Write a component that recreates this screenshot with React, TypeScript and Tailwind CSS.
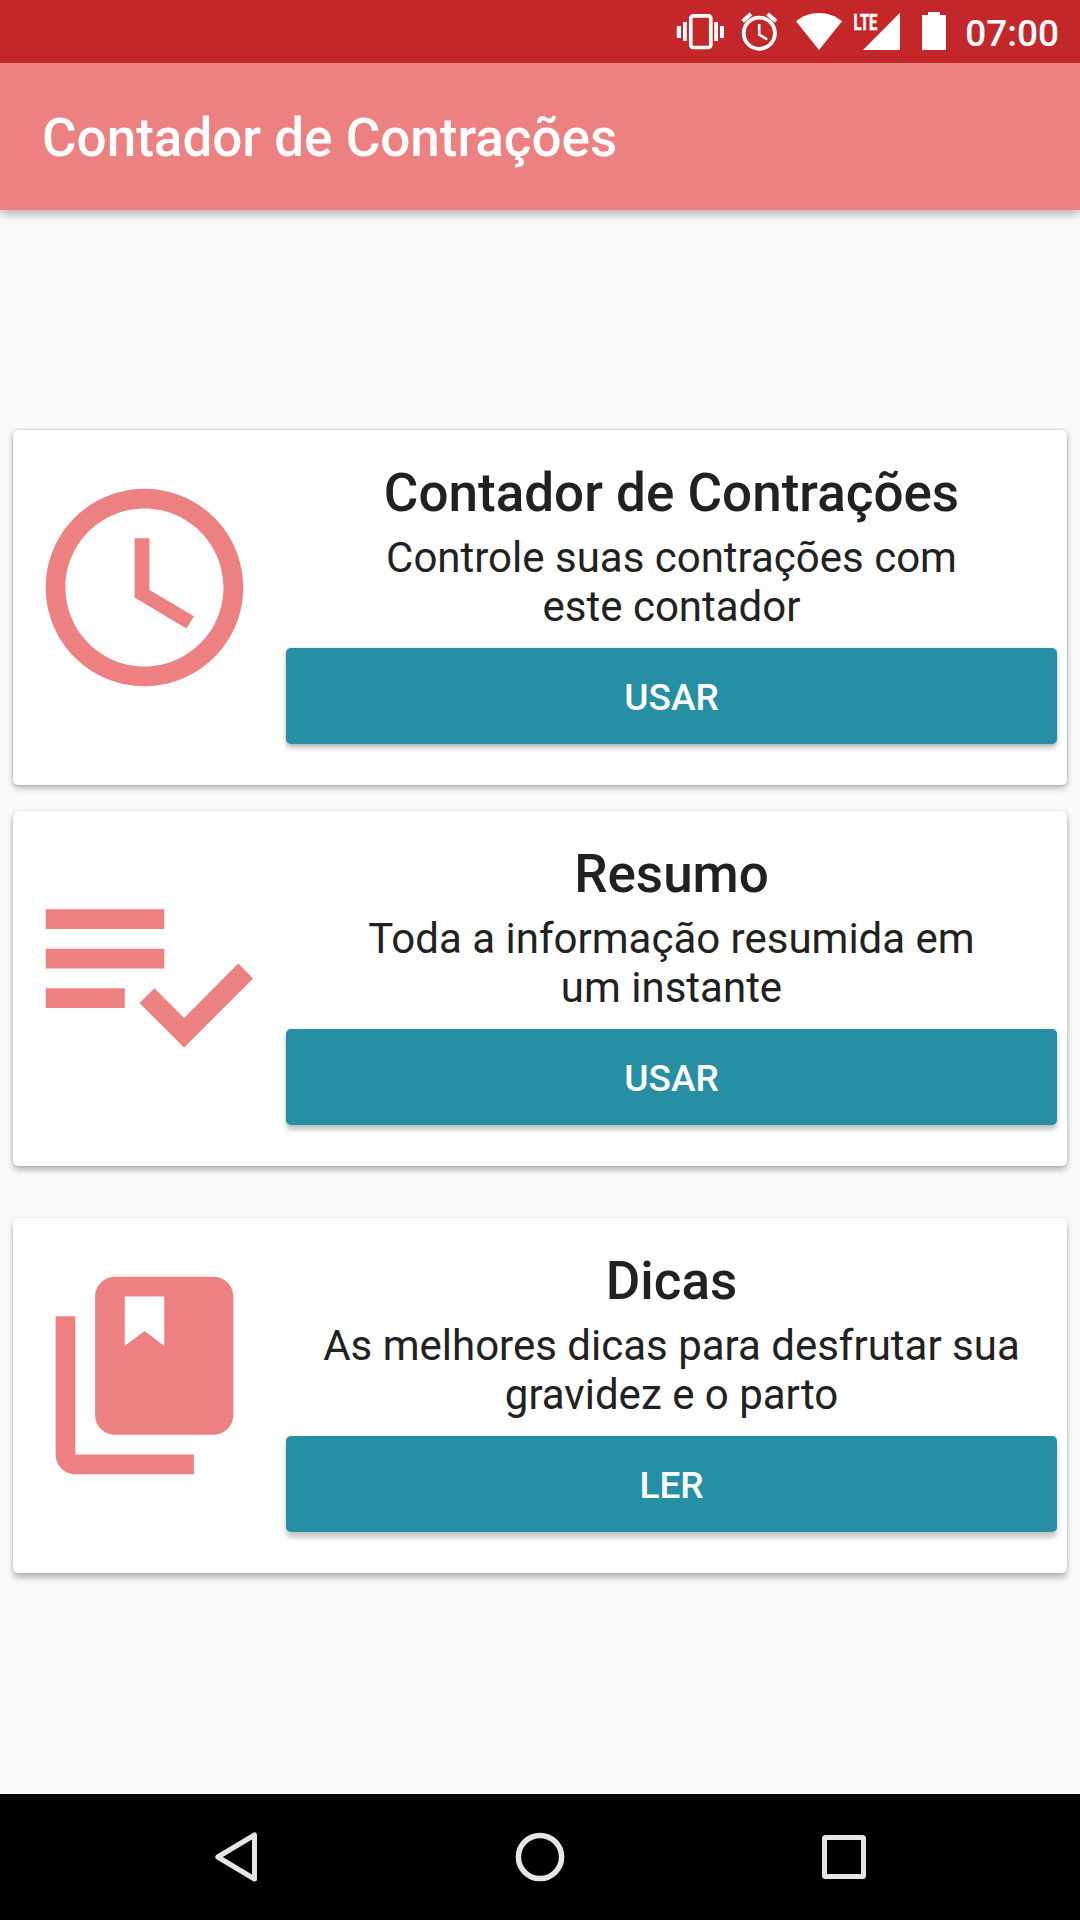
import React from 'react';

const ClockIcon = () => (
  <svg viewBox="0 0 24 24" className="w-[237px] h-[237px] fill-[#ed8080]">
    <path d="M12 2C6.48 2 2 6.48 2 12s4.48 10 10 10 10-4.48 10-10S17.52 2 12 2zm0 18c-4.42 0-8-3.58-8-8s3.58-8 8-8 8 3.58 8 8-3.58 8-8 8z" />
    <path d="M12.5 7H11v6l5.25 3.15.75-1.23-4.5-2.67z" />
  </svg>
);

const ListCheckIcon = () => (
  <svg viewBox="0 0 24 24" className="w-[237px] h-[237px] fill-[#ed8080]">
    <path d="M14 10H2v2h12v-2zm0-4H2v2h12V6zM2 16h8v-2H2v2zm19.5-4.5L23 13l-6.99 7-4.51-4.5L13 14l3.01 3 5.49-5.5z" />
  </svg>
);

const BooksIcon = () => (
  <svg viewBox="0 0 24 24" className="w-[237px] h-[237px] fill-[#ed8080]">
    <path d="M5 6H3v14c0 1.1.9 2 2 2h12v-2H5V6z" />
    <path d="M19 2H9c-1.1 0-2 .9-2 2v12c0 1.1.9 2 2 2h10c1.1 0 2-.9 2-2V4c0-1.1-.9-2-2-2zm-5 7-2-1.5L10 9V4h4v5z" />
  </svg>
);

// Shadows fall a little lower the further down the screen a card sits
const cards = [
  {
    title: 'Contador de Contrações',
    lines: ['Controle suas contrações com', 'este contador'],
    action: 'USAR',
    icon: <ClockIcon />,
    cardClass: 'shadow-[0_3px_6px_rgba(0,0,0,0.28),0_0_3px_rgba(0,0,0,0.18)]',
    buttonClass: 'shadow-[0_4px_5px_rgba(0,0,0,0.24),0_0_3px_rgba(0,0,0,0.15)]',
  },
  {
    title: 'Resumo',
    lines: ['Toda a informação resumida em', 'um instante'],
    action: 'USAR',
    icon: <ListCheckIcon />,
    cardClass: 'mt-[26px] shadow-[0_4px_6px_rgba(0,0,0,0.28),0_0_3px_rgba(0,0,0,0.15)]',
    buttonClass: 'shadow-[0_5px_5px_rgba(0,0,0,0.22),0_0_3px_rgba(0,0,0,0.13)]',
  },
  {
    title: 'Dicas',
    lines: ['As melhores dicas para desfrutar sua', 'gravidez e o parto'],
    action: 'LER',
    icon: <BooksIcon />,
    cardClass: 'mt-[52px] shadow-[0_5px_6px_rgba(0,0,0,0.26),0_0_3px_rgba(0,0,0,0.12)]',
    buttonClass: 'shadow-[0_6px_5px_rgba(0,0,0,0.2),0_0_3px_rgba(0,0,0,0.11)]',
  },
];

const StatusBar = () => (
  <div className="relative z-10 h-[63px] bg-[#c4272a] flex items-start justify-end pr-[21px] text-white">
    {/* vibrate */}
    <svg width="48" height="63" viewBox="0 0 48 63" className="mr-[17px]" fill="currentColor">
      <rect x="14.8" y="15.8" width="20" height="31.7" rx="2.5" fill="none" stroke="currentColor" strokeWidth="3.7" />
      <rect x="0.8" y="26" width="4.2" height="12" />
      <rect x="7" y="22" width="3.8" height="19" />
      <rect x="38.2" y="22" width="3.8" height="19" />
      <rect x="44" y="26" width="4" height="12" />
    </svg>
    {/* alarm */}
    <svg width="38" height="63" viewBox="0 0 38 63" className="mr-[17px]" fill="none" stroke="currentColor">
      <circle cx="18.3" cy="33.2" r="15.6" strokeWidth="3.8" />
      <path d="M1.6 21.2 10 14M35 21.2 26.6 14" strokeWidth="3.9" />
      <path d="M18.2 24v10.5l8 5" strokeWidth="2.6" />
    </svg>
    {/* wifi */}
    <svg width="46" height="63" viewBox="0 0 46 63" className="mr-[12px]" fill="currentColor">
      <path d="M23 50 0 21.3C6.5 16 14 13 23 13s16.5 3 23 8.3z" />
    </svg>
    {/* signal */}
    <svg width="46" height="63" viewBox="0 0 46 63" className="mr-[22px] overflow-visible" fill="currentColor">
      <path d="M46 12.7V50H9z" />
      <text x="-0.5" y="29.5" textLength="24" lengthAdjust="spacingAndGlyphs" stroke="currentColor" strokeWidth="0.6" className="font-bold text-[22.5px]">LTE</text>
    </svg>
    {/* battery */}
    <svg width="24" height="63" viewBox="0 0 24 63" className="mr-[19px]" fill="currentColor">
      <path d="M6 12h12v3h6v35H0V15h6z" />
    </svg>
    <span className="pt-[12px] text-[37px] leading-[44px] font-medium">07:00</span>
  </div>
);

const NavBar = () => (
  <div className="h-[126px] bg-black px-[84px] grid grid-cols-3 items-center justify-items-center">
    <svg width="52" height="52" viewBox="0 0 52 52" fill="none" stroke="#e6e6e6" strokeWidth="5" strokeLinejoin="round">
      <path d="M7.8 26 44.5 4v44z" />
    </svg>
    <svg width="52" height="52" viewBox="0 0 52 52" fill="none" stroke="#e6e6e6" strokeWidth="5.5">
      <circle cx="26" cy="26" r="21.6" />
    </svg>
    <svg width="52" height="52" viewBox="0 0 52 52" fill="none" stroke="#e6e6e6" strokeWidth="5">
      <rect x="6.5" y="6.5" width="39" height="39" rx="1" />
    </svg>
  </div>
);

const App = () => {
  return <div className="w-[1080px] h-[1920px] flex flex-col overflow-hidden bg-[#fafafa] font-['Roboto',sans-serif]">
      <StatusBar />
      <header className="h-[147px] bg-[#ed8080] px-[42px] pt-[44px] shadow-[0_4px_10px_rgba(0,0,0,0.3)]">
        <h1 className="text-white text-[53px] leading-[62px] font-medium">Contador de Contrações</h1>
      </header>

      <main className="flex-1 pt-[220px] px-[13px]">
        {cards.map(card => (
          <section key={card.title} className={`h-[355px] rounded-[5px] bg-white flex ${card.cardClass}`}>
            <div className="w-[273px] pl-[13px] pt-[39px]">
              {card.icon}
            </div>
            <div className="w-[771px] pt-[32px] flex flex-col text-center text-[#212121]">
              <h2 className="text-[53px] leading-[62px] font-medium">{card.title}</h2>
              <p className="mt-[9px] text-[42px] leading-[49px]">
                {card.lines[0]}
                <br />
                {card.lines[1]}
              </p>
              <button className={`mt-[17px] h-24 pt-[3px] rounded-[5px] bg-[#268fa3] text-white text-[37px] font-medium ${card.buttonClass}`}>
                {card.action}
              </button>
            </div>
          </section>
        ))}
      </main>
      <NavBar />
    </div>;
};

export default App;
